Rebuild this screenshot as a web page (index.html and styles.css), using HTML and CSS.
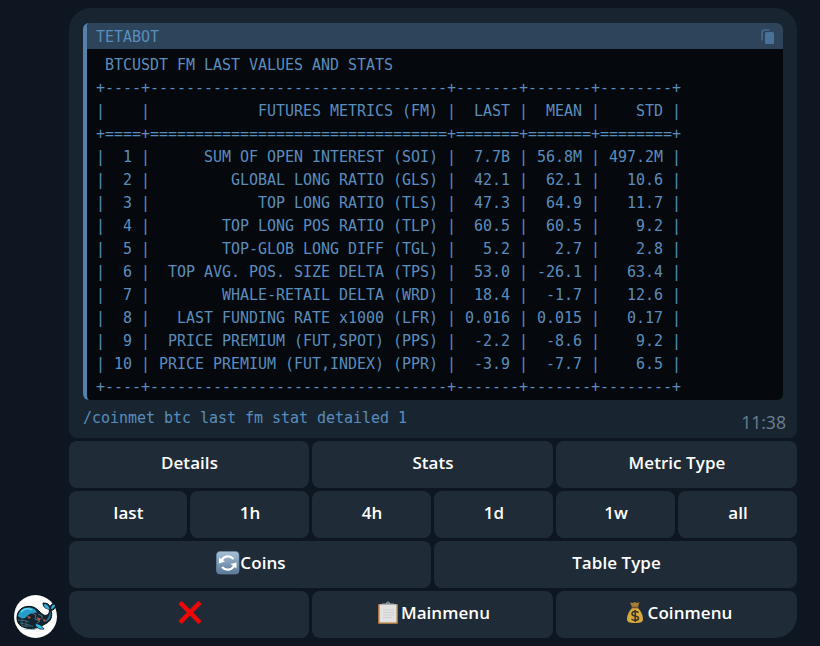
FILE: index.html
```
<!DOCTYPE html>
<html lang="en">
<head>
<meta charset="utf-8">
<title>Tetabot</title>
<link rel="stylesheet" href="styles.css">
</head>
<body>
<main class="chat">
  <aside class="avatar">
    <svg width="43" height="43" viewBox="0 0 43 43">
      <circle cx="21.5" cy="21.5" r="21.5" fill="#fff"/>
      <path d="M5 34h17l4-1-6 2z" fill="#7eaecb"/>
      <path d="M3 23C3 15 9 10.500 17 11.500C24 12.500 26 19 31 20.500C35 20 36 17 35 14C31 14 29 11 29 8C33 8 35 9 36 12C37 9 39 8 42 9C42 13 40 15 37 15.500C39 21 37 27 30 29.500C24 34 13 35 7 31C4 29 3 26 3 23Z" fill="#122530" stroke="#07121a" stroke-width="1"/>
      <path d="M4 21C5 15 10 12 16 12.500C20 13 22 15 23 18C18 17 14 20 11 23C9 24 6 23 4 21Z" fill="#259dcb"/>
      <path d="M7 17C10 13 15 13 18 15" fill="none" stroke="#65d0ef" stroke-width="1.500"/>
      <path d="M30 9C33 9 35 11 35.500 14C32 14 30 12 30 9ZM37 14C37 11 39 9 41 10C41 12 39 14 37 14Z" fill="#35addb"/>
      <path d="M36 16C38 21 36 25 31 27C33 24 36 21 36 16Z" fill="#28799d"/>
      <path d="M4 25C9 26 12 25 15 27M6 28L16 30M8 31L19 31M8 24V31M12 25V32" fill="none" stroke="#477184" stroke-width=".8"/>
      <path d="M13 21l4 1-2 2zM23 22l4 2-3 2zM29 24l3 1-2 2z" fill="#c75b43"/>
      <path d="M18 18l4 2-1 4 5 2-4 3M24 19l4 2v3" fill="none" stroke="#58717b" stroke-width="1"/>
      <path d="M21 29C25 28 28 31 30 34C26 35 22 33 21 29Z" fill="#32bce5" stroke="#07121a" stroke-width=".7"/>
    </svg>
  </aside>
  <section class="message">
    <article class="bubble">
      <div class="code">
        <header class="code-head">
          <span>TETABOT</span>
          <svg width="14" height="16" viewBox="0 0 14 16">
            <path d="M1 11.500V3.500Q1 1 3.500 1H8.500" fill="none" stroke="#44698d" stroke-width="1.600"/>
            <rect x="4" y="3" width="9" height="12" rx="1.500" fill="#4a7197"/>
          </svg>
        </header>
<pre class="code-body"> BTCUSDT FM LAST VALUES AND STATS
+----+---------------------------------+-------+-------+--------+
|    |            FUTURES METRICS (FM) |  LAST |  MEAN |    STD |
+====+=================================+=======+=======+========+
|  1 |      SUM OF OPEN INTEREST (SOI) |  7.7B | 56.8M | 497.2M |
|  2 |         GLOBAL LONG RATIO (GLS) |  42.1 |  62.1 |   10.6 |
|  3 |            TOP LONG RATIO (TLS) |  47.3 |  64.9 |   11.7 |
|  4 |        TOP LONG POS RATIO (TLP) |  60.5 |  60.5 |    9.2 |
|  5 |        TOP-GLOB LONG DIFF (TGL) |   5.2 |   2.7 |    2.8 |
|  6 |  TOP AVG. POS. SIZE DELTA (TPS) |  53.0 | -26.1 |   63.4 |
|  7 |        WHALE-RETAIL DELTA (WRD) |  18.4 |  -1.7 |   12.6 |
|  8 |   LAST FUNDING RATE x1000 (LFR) | 0.016 | 0.015 |   0.17 |
|  9 |  PRICE PREMIUM (FUT,SPOT) (PPS) |  -2.2 |  -8.6 |    9.2 |
| 10 | PRICE PREMIUM (FUT,INDEX) (PPR) |  -3.9 |  -7.7 |    6.5 |
+----+---------------------------------+-------+-------+--------+</pre>
      </div>
      <footer class="bubble-foot">
        <span class="command">/coinmet btc last fm stat detailed 1</span>
        <time class="time">11:38</time>
      </footer>
    </article>
    <nav class="keyboard">
      <div class="row cols-3"><button>Details</button><button>Stats</button><button>Metric Type</button></div>
      <div class="row cols-6"><button>last</button><button>1h</button><button>4h</button><button>1d</button><button>1w</button><button>all</button></div>
      <div class="row cols-2">
        <button>
          <svg width="24" height="24" viewBox="0 0 24 24">
            <defs><linearGradient id="tile" x2="0" y2="1"><stop stop-color="#a8c0d6"/><stop offset="1" stop-color="#58799b"/></linearGradient></defs>
            <rect x=".5" y=".5" width="22.500" height="22.500" rx="3.500" fill="url(#tile)" stroke="#6f8ba8" stroke-width=".6"/>
            <path d="M5.500 9.500C8 4.500 14 4 17.500 8M18.500 14.500C15.500 19.500 9.500 20 6 16" fill="none" stroke="#fff" stroke-width="2.300"/>
            <path d="M3 6.500v6l6-2zM20.500 11.500v6l-6-4.500z" fill="#fff"/>
          </svg>Coins
        </button>
        <button>Table Type</button>
      </div>
      <div class="row cols-3 last-row">
        <button>
          <svg width="24" height="24" viewBox="0 0 24 24"><path d="M2 1.500L22 21.500M22 1.500L2 21.500" stroke="#f00808" stroke-width="4.500"/></svg>
        </button>
        <button>
          <svg width="24" height="24" viewBox="0 0 24 24">
            <rect x="1" y="3" width="20" height="20" rx="1" fill="#a9773c"/>
            <path d="M2.500 3.500H19.500V21.500H2.500Z" fill="#e2e2e2"/>
            <path d="M6 9H17M6 11.500H17M6 14H17M6 16.500H15" stroke="#cfcfd2" stroke-width="1"/>
            <path d="M5 4V2.500H9Q9.500.5 11 .5T13 2.500H17V4Z" fill="#a4adb1"/>
            <circle cx="11" cy="2" r=".8" fill="#44515a"/>
          </svg>Mainmenu
        </button>
        <button>
          <svg width="23" height="24" viewBox="0 0 23 24">
            <path d="M5 1.500L8 2L10 1L12 2L14.500 1L13 6H7Z" fill="#a87d38"/>
            <path d="M7 7C4 10 2 14 2 18C2 21 4 22 10 22S18 21 18 18C18 14 16 10 13 7Z" fill="#d8a93d"/>
            <path d="M6.500 6.500H13.500" stroke="#70522c" stroke-width="1.600"/>
            <path d="M13.500 11.500C11 10 7 10 7 13C7 16 13.500 14 13.500 17C13.500 20 9 20 6.500 18M10.200 9V21" fill="none" stroke="#3d3426" stroke-width="1.600"/>
          </svg>Coinmenu
        </button>
      </div>
    </nav>
  </section>
</main>
</body>
</html>
```
FILE: styles.css
```
* { box-sizing: border-box; }
body {
  margin: 0;
  height: 646px;
  overflow: hidden;
  background: #0e1621;
  font-family: "Open Sans", "Noto Sans", sans-serif;
}
.chat {
  display: flex;
  align-items: flex-end;
  gap: 12px;
  height: 638px;
  padding: 8px 23px 0 14px;
}
.avatar { width: 43px; height: 43px; }
.avatar svg { display: block; }
.message {
  flex: 1;
  display: flex;
  flex-direction: column;
  gap: 3px;
}
.bubble {
  height: 430px;
  padding: 15px 14px 0;
  border-radius: 22px 22px 8px 8px;
  background: #182531;
}
.code {
  height: 377px;
  overflow: hidden;
  border-left: 4px solid #5383ad;
  border-radius: 6px;
  background: #05080c;
  color: #5a8dbc;
}
.code-head {
  display: flex;
  align-items: center;
  justify-content: space-between;
  height: 26px;
  padding: 2px 8px 0 9px;
  background: #2d445b;
}
.code-head, .code-body, .command {
  font-family: "DejaVu Sans Mono", monospace;
  font-size: 15px;
  letter-spacing: -0.031px;
}
.code-body {
  margin: 0;
  padding: 5px 0 0 9px;
  line-height: 23px;
}
.bubble-foot {
  display: flex;
  justify-content: space-between;
  height: 38px;
}
.command {
  color: #5a8dbc;
  line-height: 36px;
}
.time {
  margin-right: -3px;
  color: #6d7f8f;
  font-size: 17.6px;
  line-height: 45px;
}
.keyboard {
  display: flex;
  flex-direction: column;
  gap: 3px;
}
.row {
  display: grid;
  gap: 3px;
  height: 47px;
}
.cols-2 { grid-template-columns: 362px 1fr; }
.cols-3 { grid-template-columns: 240px repeat(2, 1fr); }
.cols-6 { grid-template-columns: 118px repeat(5, 1fr); }
.row button {
  display: flex;
  align-items: center;
  justify-content: center;
  min-width: 0;
  padding: 0 0 4px 1px;
  border: 0;
  border-radius: 8px;
  background: #1f2c38;
  color: #fff;
  font: 600 17px "Open Sans", "Noto Sans", sans-serif;
  letter-spacing: 0.06px;
}
.cols-2 button, .last-row button { padding-left: 2px; }
.last-row button:first-child { border-bottom-left-radius: 22px; }
.last-row button:last-child {
  padding-left: 4px;
  border-bottom-right-radius: 22px;
}
```
